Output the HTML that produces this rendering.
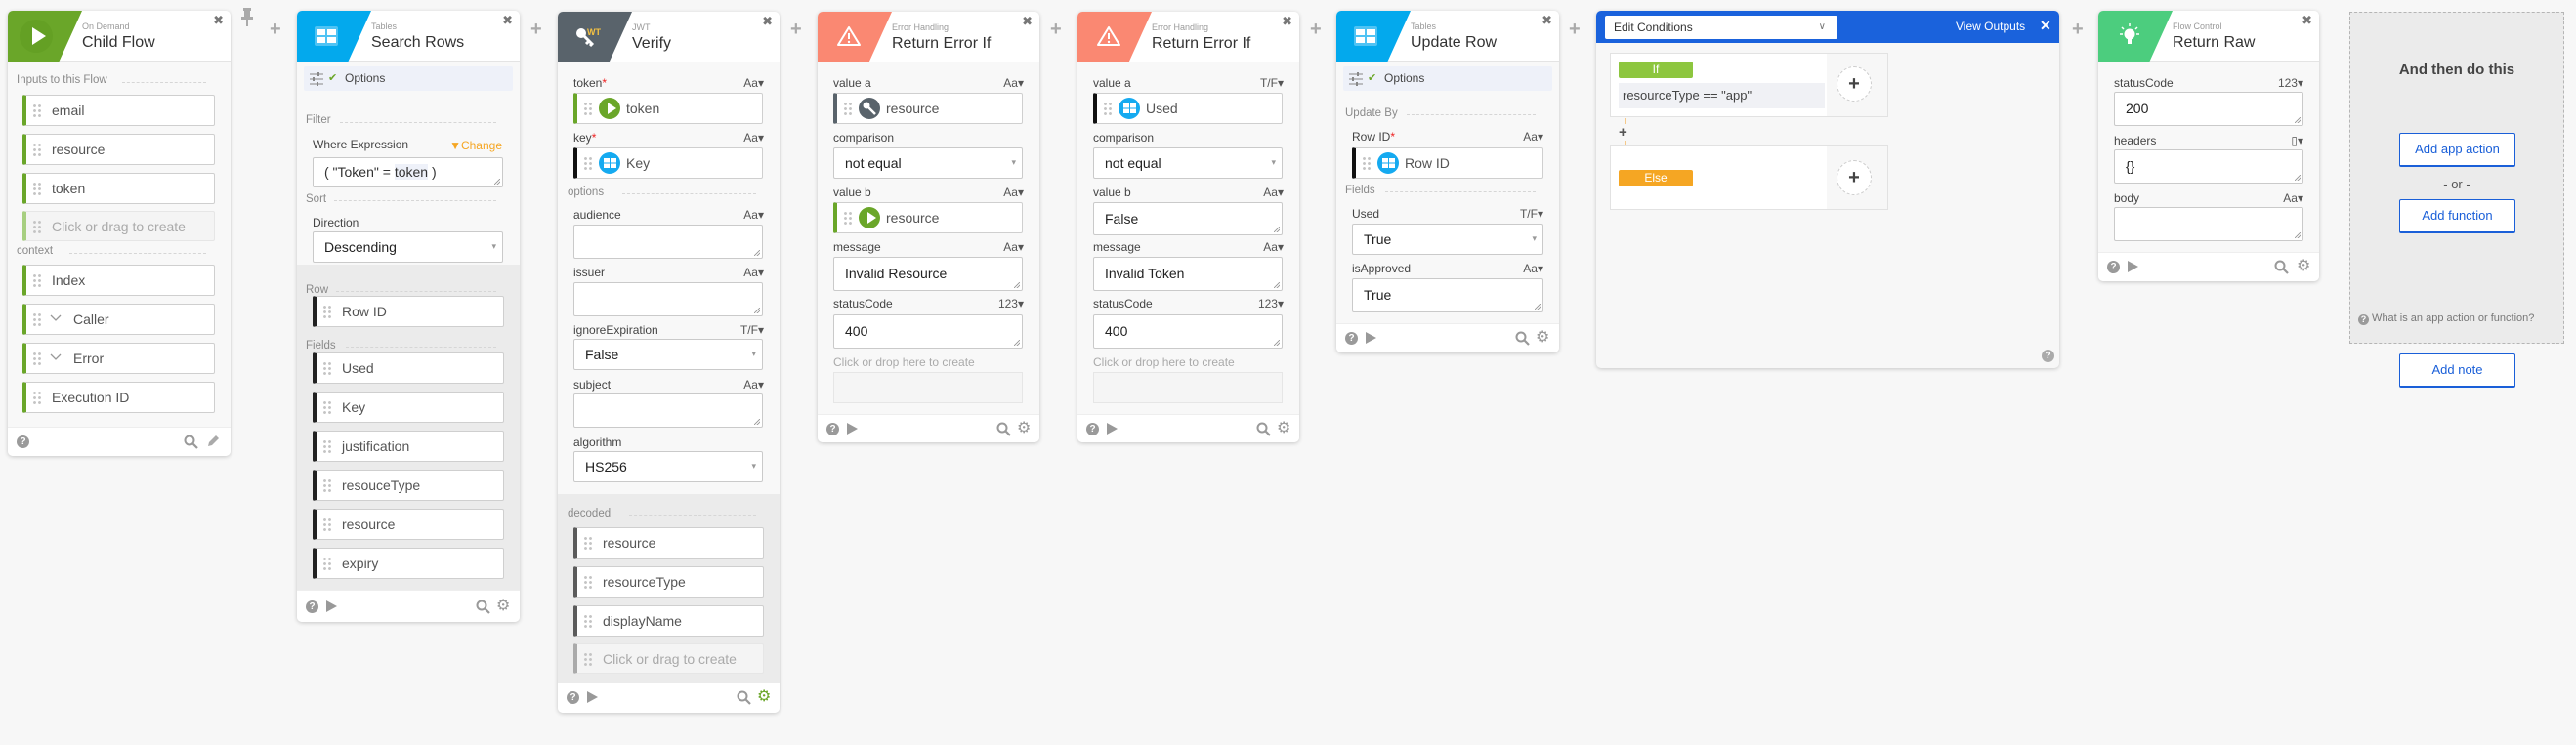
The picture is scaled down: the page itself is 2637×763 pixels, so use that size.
<!DOCTYPE html>
<html><head><meta charset="utf-8"><style>
*{margin:0;padding:0}
body{width:2637px;height:763px;background:#f7f7f7;font-family:"Liberation Sans",sans-serif;position:relative;overflow:hidden;color:#444}
.c{position:absolute;background:#f8f8f8;border-radius:5px;box-shadow:0 1px 4px rgba(0,0,0,.2);overflow:hidden}
.h{position:absolute;left:0;top:0;right:0;height:51px;background:#fff;border-bottom:1px solid #e4e4e4}
.ic{position:absolute;left:0;top:0;width:76px;height:52px;clip-path:polygon(0 0,100% 0,69% 100%,0 100%)}
.sub{position:absolute;left:76px;top:11px;font-size:9px;color:#9a9a9a}
.ttl{position:absolute;left:76px;top:24px;font-size:16px;color:#333}
.x{position:absolute;right:7px;top:3px;font-size:13px;color:#777;font-family:"DejaVu Sans",sans-serif}
.l{position:absolute;font-size:12px;color:#444;line-height:14px;white-space:nowrap}
.rt{position:absolute;right:16px;font-size:12px;color:#555;line-height:14px}
.req{color:#e22}
.sec{position:absolute;font-size:11.5px;color:#8a8a8a;line-height:14px;white-space:nowrap}
.dl{position:absolute;border-top:1px dashed #d6d6d6;height:0}
.f{position:absolute;height:32px;box-sizing:border-box;background:#fff;border:1px solid #cfcfcf;border-left:4px solid #6aa629;border-radius:2px;font-size:14px;color:#555;line-height:30px;padding-left:26px;white-space:nowrap}
.f i{position:absolute;left:6px;top:8px;width:10px;height:15px;background:radial-gradient(circle,#c4c4c4 1.2px,transparent 1.7px) 0 0/5px 5px}
.ph{background:#f4f4f4;border-color:#e6e6e6;color:#aaa}
.t{position:absolute;box-sizing:border-box;background:#fff;border:1px solid #cacaca;border-radius:2px;font-size:14px;color:#222;padding-left:11px;white-space:nowrap}
.t::after{content:"";position:absolute;right:2px;bottom:2px;width:6px;height:6px;background:linear-gradient(135deg,transparent 45%,#999 46%,#999 54%,transparent 55%,transparent 70%,#999 71%,#999 79%,transparent 80%)}
.s{position:absolute;box-sizing:border-box;background:#fff;border:1px solid #cacaca;border-radius:2px;font-size:14px;color:#222;padding-left:11px;line-height:30px;height:32px}
.s::after{content:"▾";position:absolute;right:6px;top:0;font-size:9px;color:#999;font-family:"DejaVu Sans",sans-serif}
.ft{position:absolute;left:0;right:0;bottom:0;height:29px;background:#fff;border-top:1px solid #eee}
.q{position:absolute;top:8px;width:13px;height:13px;border-radius:50%;background:#9a9a9a;color:#fff;font-size:10px;font-weight:bold;text-align:center;line-height:13px}
.pl{position:absolute;top:8px;width:0;height:0;border-left:11px solid #999;border-top:6px solid transparent;border-bottom:6px solid transparent}
.gr{position:absolute;top:3px;font-size:16px;color:#999;font-family:"DejaVu Sans",sans-serif}
.opt{position:absolute;left:7px;right:7px;top:57px;height:25px;background:#eef1f9;border-radius:2px;font-size:12px;color:#444;line-height:25px}
.ci{position:absolute;left:22px;top:4px;width:22px;height:22px;border-radius:50%}
.plus{position:absolute;top:19px;font-size:20px;color:#aaa;font-weight:bold}
.sep{position:absolute;left:0;right:0;background:#ebebeb}
.btn{position:absolute;box-sizing:border-box;background:#fff;border:1px solid #1a5fd8;border-bottom-width:2px;border-radius:2px;color:#1a5fd8;font-size:13px;text-align:center}
.chev{position:absolute;left:24px;top:10px}
</style></head><body>

<div class="plus" style="left:276px">+</div>
<svg style="position:absolute;left:246px;top:8px" width="14" height="20"><rect x="3" y="0" width="8" height="3" fill="#aaa"/><rect x="4" y="3" width="6" height="6" fill="#aaa"/><rect x="1" y="9" width="12" height="3" fill="#aaa"/><rect x="6" y="12" width="2" height="7" fill="#aaa"/></svg>
<div class="plus" style="left:543px">+</div>
<div class="plus" style="left:809px">+</div>
<div class="plus" style="left:1075px">+</div>
<div class="plus" style="left:1341px">+</div>
<div class="plus" style="left:1606px">+</div>
<div class="plus" style="left:2121px">+</div>

<!-- Card 1 Child Flow -->
<div class="c" style="left:8px;top:11px;width:228px;height:456px">
 <div class="h"><div class="ic" style="background:#6aa629"></div>
  <div style="position:absolute;left:12px;top:9px;width:34px;height:34px;border-radius:50%;background:#64a024"></div>
  <div style="position:absolute;left:25px;top:17px;border-left:14px solid #fff;border-top:9px solid transparent;border-bottom:9px solid transparent"></div>
  <div class="sub">On Demand</div><div class="ttl">Child Flow</div><div class="x">✖</div></div>
 <div class="sec" style="left:9px;top:64px">Inputs to this Flow</div><div class="dl" style="left:117px;right:25px;top:73px"></div>
 <div class="f" style="left:15px;top:86px;width:197px"><i></i>email</div>
 <div class="f" style="left:15px;top:126px;width:197px"><i></i>resource</div>
 <div class="f" style="left:15px;top:166px;width:197px"><i></i>token</div>
 <div class="f ph" style="left:15px;top:205px;width:197px;height:31px;border-left-color:#a7cf80"><i></i>Click or drag to create</div>
 <div class="sec" style="left:9px;top:239px">context</div><div class="dl" style="left:63px;right:25px;top:248px"></div>
 <div class="f" style="left:15px;top:260px;width:197px"><i></i>Index</div>
 <div class="f" style="left:15px;top:300px;width:197px;padding-left:48px"><i></i><svg class="chev" width="12" height="8"><path d="M1 1l5 5 5-5" fill="none" stroke="#999" stroke-width="1.3"/></svg>Caller</div>
 <div class="f" style="left:15px;top:340px;width:197px;padding-left:48px"><i></i><svg class="chev" width="12" height="8"><path d="M1 1l5 5 5-5" fill="none" stroke="#999" stroke-width="1.3"/></svg>Error</div>
 <div class="f" style="left:15px;top:380px;width:197px"><i></i>Execution ID</div>
 <div class="ft"><div class="q" style="left:9px">?</div>
  <svg style="position:absolute;left:180px;top:7px" width="15" height="15"><circle cx="6" cy="6" r="4.5" fill="none" stroke="#999" stroke-width="2"/><path d="M9 9l5 5" stroke="#999" stroke-width="2.2"/></svg>
  <svg style="position:absolute;left:203px;top:7px" width="14" height="14"><path d="M2 12l1-4 7-7 3 3-7 7z" fill="#aaa"/></svg></div>
</div>

<!-- Card 2 Search Rows -->
<div class="c" style="left:304px;top:11px;width:228px;height:626px">
 <div class="h"><div class="ic" style="background:#03a9ed"></div>
  <svg style="position:absolute;left:18px;top:16px" width="24" height="20"><rect width="24" height="20" rx="2" fill="#4fc3f4"/><rect x="2" y="3" width="9" height="6" fill="#fff"/><rect x="13" y="3" width="9" height="6" fill="#fff"/><rect x="2" y="11" width="9" height="6" fill="#fff"/><rect x="13" y="11" width="9" height="6" fill="#fff"/></svg>
  <div class="sub">Tables</div><div class="ttl">Search Rows</div><div class="x">✖</div></div>
 <div class="opt"><svg style="position:absolute;left:6px;top:6px" width="14" height="14"><path d="M0 2h14M0 7h14M0 12h14" stroke="#888"/><rect x="8" y="0" width="2" height="4" fill="#888"/><rect x="3" y="5" width="2" height="4" fill="#888"/><rect x="7" y="10" width="2" height="4" fill="#888"/></svg><span style="position:absolute;left:25px;color:#6aa629;font-size:11px">✔</span><span style="position:absolute;left:42px">Options</span></div>
 <div class="sec" style="left:9px;top:105px">Filter</div><div class="dl" style="left:44px;right:24px;top:114px"></div>
 <div class="l" style="left:16px;top:130px">Where Expression</div><div class="rt" style="top:131px;right:18px;color:#f5a623">▼Change</div>
 <div class="t" style="left:16px;top:150px;width:195px;height:31px;line-height:29px;color:#333">( "Token" = <span style="background:#eef1f9">token</span> )</div>
 <div class="sec" style="left:9px;top:186px">Sort</div><div class="dl" style="left:38px;right:24px;top:194px"></div>
 <div class="l" style="left:16px;top:210px">Direction</div>
 <div class="s" style="left:16px;top:226px;width:195px">Descending</div>
 <div class="sep" style="top:260px;bottom:0"></div>
 <div class="sec" style="left:9px;top:279px">Row</div><div class="dl" style="left:40px;right:24px;top:287px"></div>
 <div class="f" style="left:16px;top:292px;width:196px;border-left-color:#222"><i></i>Row ID</div>
 <div class="sec" style="left:9px;top:336px">Fields</div><div class="dl" style="left:50px;right:24px;top:344px"></div>
 <div class="f" style="left:16px;top:350px;width:196px;border-left-color:#222"><i></i>Used</div>
 <div class="f" style="left:16px;top:390px;width:196px;border-left-color:#222"><i></i>Key</div>
 <div class="f" style="left:16px;top:430px;width:196px;border-left-color:#222"><i></i>justification</div>
 <div class="f" style="left:16px;top:470px;width:196px;border-left-color:#222"><i></i>resouceType</div>
 <div class="f" style="left:16px;top:510px;width:196px;border-left-color:#222"><i></i>resource</div>
 <div class="f" style="left:16px;top:550px;width:196px;border-left-color:#222"><i></i>expiry</div>
 <div class="ft" style="height:32px"><div class="q" style="left:9px;top:10px">?</div><div class="pl" style="left:30px;top:10px"></div>
  <svg style="position:absolute;left:183px;top:9px" width="15" height="15"><circle cx="6" cy="6" r="4.5" fill="none" stroke="#999" stroke-width="2"/><path d="M9 9l5 5" stroke="#999" stroke-width="2.2"/></svg><div class="gr" style="left:204px;top:5px">⚙</div></div>
</div>

<!-- Card 3 Verify -->
<div class="c" style="left:571px;top:12px;width:227px;height:718px">
 <div class="h"><div class="ic" style="background:#59636b"></div>
  <svg style="position:absolute;left:17px;top:15px" width="22" height="22"><circle cx="7" cy="7" r="5" fill="#fff"/><path d="M10 10l9 9M15 15l-3 3M18 18l-2 2" stroke="#fff" stroke-width="3"/></svg>
  <div style="position:absolute;left:30px;top:16px;font-size:9px;color:#f5c242;font-weight:bold">WT</div>
  <div class="sub">JWT</div><div class="ttl">Verify</div><div class="x">✖</div></div>
 <div class="l" style="left:16px;top:66px">token<span class="req">*</span></div><div class="rt" style="top:66px">Aa▾</div>
 <div class="f" style="left:16px;top:83px;width:194px;padding-left:50px"><i></i><div class="ci" style="background:#6aa629"></div><div style="position:absolute;left:31px;top:9px;border-left:9px solid #fff;border-top:6px solid transparent;border-bottom:6px solid transparent"></div>token</div>
 <div class="l" style="left:16px;top:122px">key<span class="req">*</span></div><div class="rt" style="top:122px">Aa▾</div>
 <div class="f" style="left:16px;top:139px;width:194px;padding-left:50px;border-left-color:#111"><i></i><div class="ci" style="background:#15aaf0"></div><svg style="position:absolute;left:27px;top:10px" width="13" height="10"><rect width="13" height="10" fill="#fff"/><path d="M0 5h13M6.5 0v10" stroke="#15aaf0"/></svg>Key</div>
 <div class="sec" style="left:10px;top:178px">options</div><div class="dl" style="left:66px;right:24px;top:186px"></div>
 <div class="l" style="left:16px;top:201px">audience</div><div class="rt" style="top:201px">Aa▾</div>
 <div class="t" style="left:16px;top:218px;width:194px;height:35px"></div>
 <div class="l" style="left:16px;top:260px">issuer</div><div class="rt" style="top:260px">Aa▾</div>
 <div class="t" style="left:16px;top:277px;width:194px;height:35px"></div>
 <div class="l" style="left:16px;top:319px">ignoreExpiration</div><div class="rt" style="top:319px">T/F▾</div>
 <div class="s" style="left:16px;top:335px;width:194px">False</div>
 <div class="l" style="left:16px;top:375px">subject</div><div class="rt" style="top:375px">Aa▾</div>
 <div class="t" style="left:16px;top:391px;width:194px;height:35px"></div>
 <div class="l" style="left:16px;top:434px">algorithm</div>
 <div class="s" style="left:16px;top:450px;width:194px">HS256</div>
 <div class="sep" style="top:494px;bottom:0"></div>
 <div class="sec" style="left:10px;top:507px">decoded</div><div class="dl" style="left:73px;right:24px;top:515px"></div>
 <div class="f" style="left:16px;top:528px;width:195px;border-left-color:#5b5b5b"><i></i>resource</div>
 <div class="f" style="left:16px;top:568px;width:195px;border-left-color:#5b5b5b"><i></i>resourceType</div>
 <div class="f" style="left:16px;top:608px;width:195px;border-left-color:#5b5b5b"><i></i>displayName</div>
 <div class="f ph" style="left:16px;top:647px;width:195px;height:31px;border-left-color:#aaa"><i></i>Click or drag to create</div>
 <div class="ft" style="height:30px"><div class="q" style="left:9px">?</div><div class="pl" style="left:30px"></div>
  <svg style="position:absolute;left:183px;top:7px" width="15" height="15"><circle cx="6" cy="6" r="4.5" fill="none" stroke="#999" stroke-width="2"/><path d="M9 9l5 5" stroke="#999" stroke-width="2.2"/></svg><div class="gr" style="left:204px;color:#6aa629">⚙</div></div>
</div>

<!-- Card 4 Return Error If -->
<div class="c" style="left:837px;top:12px;width:227px;height:441px">
 <div class="h"><div class="ic" style="background:#fa8872"></div>
  <svg style="position:absolute;left:19px;top:14px" width="26" height="22"><path d="M13 2L24 20H2z" fill="none" stroke="#fff" stroke-width="2" stroke-linejoin="round"/><path d="M13 8v6" stroke="#fff" stroke-width="2"/><circle cx="13" cy="17" r="1.2" fill="#fff"/></svg>
  <div class="sub">Error Handling</div><div class="ttl">Return Error If</div><div class="x">✖</div></div>
 <div class="l" style="left:16px;top:66px">value a</div><div class="rt" style="top:66px">Aa▾</div>
 <div class="f" style="left:16px;top:83px;width:194px;padding-left:50px;border-left-color:#59636b"><i></i><div class="ci" style="background:#59636b"></div><svg style="position:absolute;left:25px;top:7px" width="16" height="16"><circle cx="5" cy="5" r="3.5" fill="#fff"/><path d="M7 7l7 7" stroke="#fff" stroke-width="2.5"/></svg>resource</div>
 <div class="l" style="left:16px;top:122px">comparison</div>
 <div class="s" style="left:16px;top:139px;width:194px">not equal</div>
 <div class="l" style="left:16px;top:178px">value b</div><div class="rt" style="top:178px">Aa▾</div>
 <div class="f" style="left:16px;top:195px;width:194px;padding-left:50px"><i></i><div class="ci" style="background:#6aa629"></div><div style="position:absolute;left:31px;top:9px;border-left:9px solid #fff;border-top:6px solid transparent;border-bottom:6px solid transparent"></div>resource</div>
 <div class="l" style="left:16px;top:234px">message</div><div class="rt" style="top:234px">Aa▾</div>
 <div class="t" style="left:16px;top:251px;width:194px;height:35px;line-height:33px">Invalid Resource</div>
 <div class="l" style="left:16px;top:292px">statusCode</div><div class="rt" style="top:292px">123▾</div>
 <div class="t" style="left:16px;top:310px;width:194px;height:35px;line-height:33px">400</div>
 <div class="l" style="left:16px;top:352px;color:#aaa">Click or drop here to create</div>
 <div style="position:absolute;left:16px;top:369px;width:194px;height:32px;box-sizing:border-box;border:1px solid #e6e6e6;background:#f5f5f5"></div>
 <div class="ft" style="height:28px"><div class="q" style="left:9px">?</div><div class="pl" style="left:30px"></div>
  <svg style="position:absolute;left:183px;top:7px" width="15" height="15"><circle cx="6" cy="6" r="4.5" fill="none" stroke="#999" stroke-width="2"/><path d="M9 9l5 5" stroke="#999" stroke-width="2.2"/></svg><div class="gr" style="left:204px">⚙</div></div>
</div>

<!-- Card 5 Return Error If -->
<div class="c" style="left:1103px;top:12px;width:227px;height:441px">
 <div class="h"><div class="ic" style="background:#fa8872"></div>
  <svg style="position:absolute;left:19px;top:14px" width="26" height="22"><path d="M13 2L24 20H2z" fill="none" stroke="#fff" stroke-width="2" stroke-linejoin="round"/><path d="M13 8v6" stroke="#fff" stroke-width="2"/><circle cx="13" cy="17" r="1.2" fill="#fff"/></svg>
  <div class="sub">Error Handling</div><div class="ttl">Return Error If</div><div class="x">✖</div></div>
 <div class="l" style="left:16px;top:66px">value a</div><div class="rt" style="top:66px">T/F▾</div>
 <div class="f" style="left:16px;top:83px;width:194px;padding-left:50px;border-left-color:#111"><i></i><div class="ci" style="background:#15aaf0"></div><svg style="position:absolute;left:27px;top:10px" width="13" height="10"><rect width="13" height="10" fill="#fff"/><path d="M0 5h13M6.5 0v10" stroke="#15aaf0"/></svg>Used</div>
 <div class="l" style="left:16px;top:122px">comparison</div>
 <div class="s" style="left:16px;top:139px;width:194px">not equal</div>
 <div class="l" style="left:16px;top:178px">value b</div><div class="rt" style="top:178px">Aa▾</div>
 <div class="t" style="left:16px;top:195px;width:194px;height:34px;line-height:32px">False</div>
 <div class="l" style="left:16px;top:234px">message</div><div class="rt" style="top:234px">Aa▾</div>
 <div class="t" style="left:16px;top:251px;width:194px;height:35px;line-height:33px">Invalid Token</div>
 <div class="l" style="left:16px;top:292px">statusCode</div><div class="rt" style="top:292px">123▾</div>
 <div class="t" style="left:16px;top:310px;width:194px;height:35px;line-height:33px">400</div>
 <div class="l" style="left:16px;top:352px;color:#aaa">Click or drop here to create</div>
 <div style="position:absolute;left:16px;top:369px;width:194px;height:32px;box-sizing:border-box;border:1px solid #e6e6e6;background:#f5f5f5"></div>
 <div class="ft" style="height:28px"><div class="q" style="left:9px">?</div><div class="pl" style="left:30px"></div>
  <svg style="position:absolute;left:183px;top:7px" width="15" height="15"><circle cx="6" cy="6" r="4.5" fill="none" stroke="#999" stroke-width="2"/><path d="M9 9l5 5" stroke="#999" stroke-width="2.2"/></svg><div class="gr" style="left:204px">⚙</div></div>
</div>

<!-- Card 6 Update Row -->
<div class="c" style="left:1368px;top:11px;width:228px;height:350px">
 <div class="h"><div class="ic" style="background:#03a9ed"></div>
  <svg style="position:absolute;left:18px;top:16px" width="24" height="20"><rect width="24" height="20" rx="2" fill="#4fc3f4"/><rect x="2" y="3" width="9" height="6" fill="#fff"/><rect x="13" y="3" width="9" height="6" fill="#fff"/><rect x="2" y="11" width="9" height="6" fill="#fff"/><rect x="13" y="11" width="9" height="6" fill="#fff"/></svg>
  <div class="sub">Tables</div><div class="ttl">Update Row</div><div class="x">✖</div></div>
 <div class="opt"><svg style="position:absolute;left:6px;top:6px" width="14" height="14"><path d="M0 2h14M0 7h14M0 12h14" stroke="#888"/><rect x="8" y="0" width="2" height="4" fill="#888"/><rect x="3" y="5" width="2" height="4" fill="#888"/><rect x="7" y="10" width="2" height="4" fill="#888"/></svg><span style="position:absolute;left:25px;color:#6aa629;font-size:11px">✔</span><span style="position:absolute;left:42px">Options</span></div>
 <div class="sec" style="left:9px;top:98px">Update By</div><div class="dl" style="left:72px;right:24px;top:106px"></div>
 <div class="l" style="left:16px;top:122px">Row ID<span class="req">*</span></div><div class="rt" style="top:122px">Aa▾</div>
 <div class="f" style="left:16px;top:140px;width:196px;padding-left:50px;border-left-color:#111"><i></i><div class="ci" style="background:#15aaf0"></div><svg style="position:absolute;left:27px;top:10px" width="13" height="10"><rect width="13" height="10" fill="#fff"/><path d="M0 5h13M6.5 0v10" stroke="#15aaf0"/></svg>Row ID</div>
 <div class="sec" style="left:9px;top:177px">Fields</div><div class="dl" style="left:50px;right:24px;top:185px"></div>
 <div class="l" style="left:16px;top:201px">Used</div><div class="rt" style="top:201px">T/F▾</div>
 <div class="s" style="left:16px;top:218px;width:196px">True</div>
 <div class="l" style="left:16px;top:257px">isApproved</div><div class="rt" style="top:257px">Aa▾</div>
 <div class="t" style="left:16px;top:274px;width:196px;height:35px;line-height:33px">True</div>
 <div class="ft" style="height:29px"><div class="q" style="left:9px">?</div><div class="pl" style="left:30px"></div>
  <svg style="position:absolute;left:183px;top:7px" width="15" height="15"><circle cx="6" cy="6" r="4.5" fill="none" stroke="#999" stroke-width="2"/><path d="M9 9l5 5" stroke="#999" stroke-width="2.2"/></svg><div class="gr" style="left:204px">⚙</div></div>
</div>

<!-- Card 7 Conditions -->
<div class="c" style="left:1634px;top:11px;width:474px;height:366px;background:#f7f7f7">
 <div style="position:absolute;left:0;top:0;right:0;height:33px;background:#1a62dc"></div>
 <div style="position:absolute;left:9px;top:5px;width:238px;height:24px;background:#fff;border-radius:2px;font-size:12px;color:#333;line-height:24px;padding-left:9px;box-sizing:border-box">Edit Conditions<span style="position:absolute;right:12px;color:#777;font-size:10px">∨</span></div>
 <div style="position:absolute;left:368px;top:9px;font-size:12px;color:#fff">View Outputs</div>
 <div style="position:absolute;left:454px;top:7px;font-size:14px;color:#fff;font-weight:bold">✕</div>
 <div style="position:absolute;left:14px;top:43px;width:285px;height:66px;box-sizing:border-box;border:1px solid #e2e2e2;background:#f7f7f7"></div>
 <div style="position:absolute;left:15px;top:44px;width:221px;height:64px;background:#fff"></div>
 <div style="position:absolute;left:23px;top:52px;width:76px;height:17px;background:#8dc63f;color:#fff;font-size:12px;text-align:center;line-height:17px;border-radius:2px">If</div>
 <div style="position:absolute;left:23px;top:74px;width:211px;height:26px;background:#f0f1f5;font-size:13px;color:#444;line-height:26px;padding-left:4px;box-sizing:border-box">resourceType == "app"</div>
 <div style="position:absolute;left:246px;top:57px;width:36px;height:36px;border-radius:50%;border:1px dashed #ccc;background:#fff;text-align:center;line-height:34px;font-size:20px;font-weight:bold;color:#444;box-sizing:border-box">+</div>
 <div style="position:absolute;left:29px;top:110px;height:38px;border-left:1px solid #f5c98a"></div>
 <div style="position:absolute;left:23px;top:116px;font-size:15px;font-weight:bold;color:#555;background:#f7f7f7">+</div>
 <div style="position:absolute;left:14px;top:138px;width:285px;height:66px;box-sizing:border-box;border:1px solid #e2e2e2;background:#f7f7f7"></div>
 <div style="position:absolute;left:15px;top:139px;width:221px;height:64px;background:#fff"></div>
 <div style="position:absolute;left:23px;top:163px;width:76px;height:17px;background:#f5a623;color:#fff;font-size:12px;text-align:center;line-height:17px;border-radius:2px">Else</div>
 <div style="position:absolute;left:246px;top:153px;width:36px;height:36px;border-radius:50%;border:1px dashed #ccc;background:#fff;text-align:center;line-height:34px;font-size:20px;font-weight:bold;color:#444;box-sizing:border-box">+</div>
 <div class="q" style="left:456px;top:347px;background:#aaa">?</div>
</div>

<!-- Card 8 Return Raw -->
<div class="c" style="left:2148px;top:11px;width:226px;height:277px">
 <div class="h"><div class="ic" style="background:#4ccd7e"></div>
  <svg style="position:absolute;left:20px;top:11px" width="24" height="28"><circle cx="12" cy="13" r="5.5" fill="#fff"/><rect x="10" y="17" width="4" height="6" fill="#fff"/><path d="M12 2v3M4 6l2 2M20 6l-2 2M2 13h3M22 13h-3" stroke="#fff" stroke-width="1.5"/></svg>
  <div class="sub">Flow Control</div><div class="ttl">Return Raw</div><div class="x">✖</div></div>
 <div class="l" style="left:16px;top:67px">statusCode</div><div class="rt" style="top:67px">123▾</div>
 <div class="t" style="left:16px;top:83px;width:194px;height:35px;line-height:33px">200</div>
 <div class="l" style="left:16px;top:126px">headers</div><div class="rt" style="top:126px">▯▾</div>
 <div class="t" style="left:16px;top:142px;width:194px;height:35px;line-height:33px">{}</div>
 <div class="l" style="left:16px;top:185px">body</div><div class="rt" style="top:185px">Aa▾</div>
 <div class="t" style="left:16px;top:201px;width:194px;height:35px"></div>
 <div class="ft" style="height:29px"><div class="q" style="left:9px">?</div><div class="pl" style="left:30px"></div>
  <svg style="position:absolute;left:180px;top:7px" width="15" height="15"><circle cx="6" cy="6" r="4.5" fill="none" stroke="#999" stroke-width="2"/><path d="M9 9l5 5" stroke="#999" stroke-width="2.2"/></svg><div class="gr" style="left:203px">⚙</div></div>
</div>

<!-- Dashed panel -->
<div style="position:absolute;left:2405px;top:12px;width:220px;height:340px;box-sizing:border-box;border:1px dashed #b5b5b5;background:#ebebeb">
 <div style="position:absolute;left:0;right:0;top:50px;text-align:center;font-size:15px;font-weight:bold;color:#444">And then do this</div>
 <div class="btn" style="left:50px;top:123px;width:119px;height:35px;line-height:32px">Add app action</div>
 <div style="position:absolute;left:0;right:0;top:168px;text-align:center;font-size:13px;color:#555">- or -</div>
 <div class="btn" style="left:50px;top:191px;width:119px;height:35px;line-height:32px">Add function</div>
 <div style="position:absolute;left:8px;top:307px;font-size:11px;color:#777;white-space:nowrap"><span class="q" style="position:relative;display:inline-block;top:1px;left:0;width:11px;height:11px;line-height:11px;font-size:9px">?</span> What is an app action or function?</div>
</div>
<div class="btn" style="left:2456px;top:362px;width:119px;height:35px;line-height:32px">Add note</div>

</body></html>
